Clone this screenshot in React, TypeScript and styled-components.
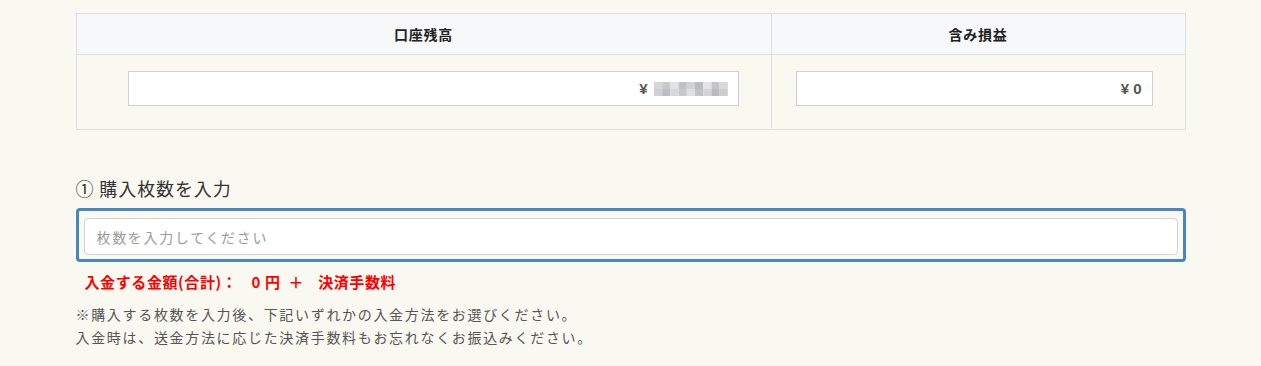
import React from 'react'
import styled, { createGlobalStyle } from 'styled-components'

const GlobalStyle = createGlobalStyle`
  html, body {
    margin: 0;
    padding: 0;
    background: #f9f9f1;
  }
  body {
    font-family: 'Noto Sans CJK JP', 'Noto Sans', sans-serif;
    color: #333;
  }
`

const Page = styled.div`
  width: 1110px;
  margin: 0 auto;
  padding-top: 13px;
`

const Table = styled.div`
  display: grid;
  grid-template-columns: 695px 1fr;
  border: 1px solid #dcdfe4;
`

const HeadCell = styled.div<{ $last?: boolean }>`
  height: 40px;
  display: flex;
  align-items: center;
  justify-content: center;
  background: #f7f8fa;
  border-bottom: 1px solid #dcdfe4;
  border-right: ${({ $last }) => ($last ? 'none' : '1px solid #dcdfe4')};
  font-size: 14px;
  font-weight: 700;
  letter-spacing: 0.05em;
  color: #222;
`

const BodyCell = styled.div<{ $left: number; $right: number; $last?: boolean }>`
  height: 74px;
  padding: 16px ${({ $right }) => $right}px 0 ${({ $left }) => $left}px;
  box-sizing: border-box;
  border-right: ${({ $last }) => ($last ? 'none' : '1px solid #dcdfe4')};
`

const ValueBox = styled.div`
  height: 35px;
  box-sizing: border-box;
  background: #fff;
  border: 1px solid #cfcfcf;
  display: flex;
  align-items: center;
  justify-content: flex-end;
  gap: 6px;
  padding-right: 10px;
  font-family: 'Liberation Sans', 'Noto Sans CJK JP', sans-serif;
  font-size: 15px;
  font-weight: 700;
  color: #555;
`

const Mosaic = () => (
  <svg width="74" height="14" viewBox="0 0 74 14">
    {[
      '#d6d6da', '#c8c9cc', '#e2e2e4', '#bfc1c4', '#d0d1d4', '#b9bbbf', '#e4e4e6', '#c5c6ca', '#d9d9dc',
      '#cfd0d3', '#bcbdc1', '#d7d8db', '#c6c7cb', '#e0e0e2', '#c2c3c7', '#d3d4d7', '#b8babd', '#cccdd0',
    ].map((c, i) => (
      <rect key={i} x={(i % 9) * 8.2} y={i < 9 ? 0 : 7} width="8.2" height="7" fill={c} />
    ))}
  </svg>
)

const Heading = styled.h2`
  margin: 45px 0 7px;
  font-size: 18px;
  font-weight: 400;
  letter-spacing: 0.05em;
  line-height: 26px;
  color: #333;
`

const FocusFrame = styled.div`
  border: 3px solid #4785c9;
  border-radius: 4px;
  padding: 7px 5px 4px;
  background: #f9f9f1;
`

const CountInput = styled.input`
  display: block;
  width: 100%;
  box-sizing: border-box;
  height: 37px;
  border: 1px solid #d3d3d3;
  border-radius: 4px;
  background: #fff;
  padding: 0 12px;
  font-family: 'Noto Sans CJK JP', sans-serif;
  font-size: 14px;
  letter-spacing: 0.12em;
  outline: none;
  &::placeholder {
    color: #9a9a9a;
  }
`

const Total = styled.div`
  margin: 10px 0 0 9px;
  font-size: 15px;
  font-weight: 700;
  letter-spacing: 0.04em;
  color: #f00;
  line-height: 20px;
  display: flex;
`

const Gap = styled.span<{ $w: number }>`
  display: inline-block;
  width: ${({ $w }) => $w}px;
`

const Notes = styled.p`
  margin: 11px 0 0;
  font-size: 14px;
  line-height: 23px;
  letter-spacing: 0.12em;
  color: #555;
`

export default function App() {
  return (
    <>
      <GlobalStyle />
      <Page>
        <Table>
          <HeadCell>口座残高</HeadCell>
          <HeadCell $last>含み損益</HeadCell>
          <BodyCell $left={51} $right={32}>
            <ValueBox>
              <span>¥</span>
              <Mosaic />
            </ValueBox>
          </BodyCell>
          <BodyCell $left={24} $right={32} $last>
            <ValueBox>
              <span>¥ 0</span>
            </ValueBox>
          </BodyCell>
        </Table>

        <Heading>① 購入枚数を入力</Heading>
        <FocusFrame>
          <CountInput placeholder="枚数を入力してください" />
        </FocusFrame>

        <Total>
          <span>入金する金額(合計)：</span>
          <Gap $w={14} />
          <span>0 円</span>
          <Gap $w={8} />
          <span>＋</span>
          <Gap $w={14} />
          <span>決済手数料</span>
        </Total>

        <Notes>
          ※購入する枚数を入力後、下記いずれかの入金方法をお選びください。
          <br />
          入金時は、送金方法に応じた決済手数料もお忘れなくお振込みください。
        </Notes>
      </Page>
    </>
  )
}
